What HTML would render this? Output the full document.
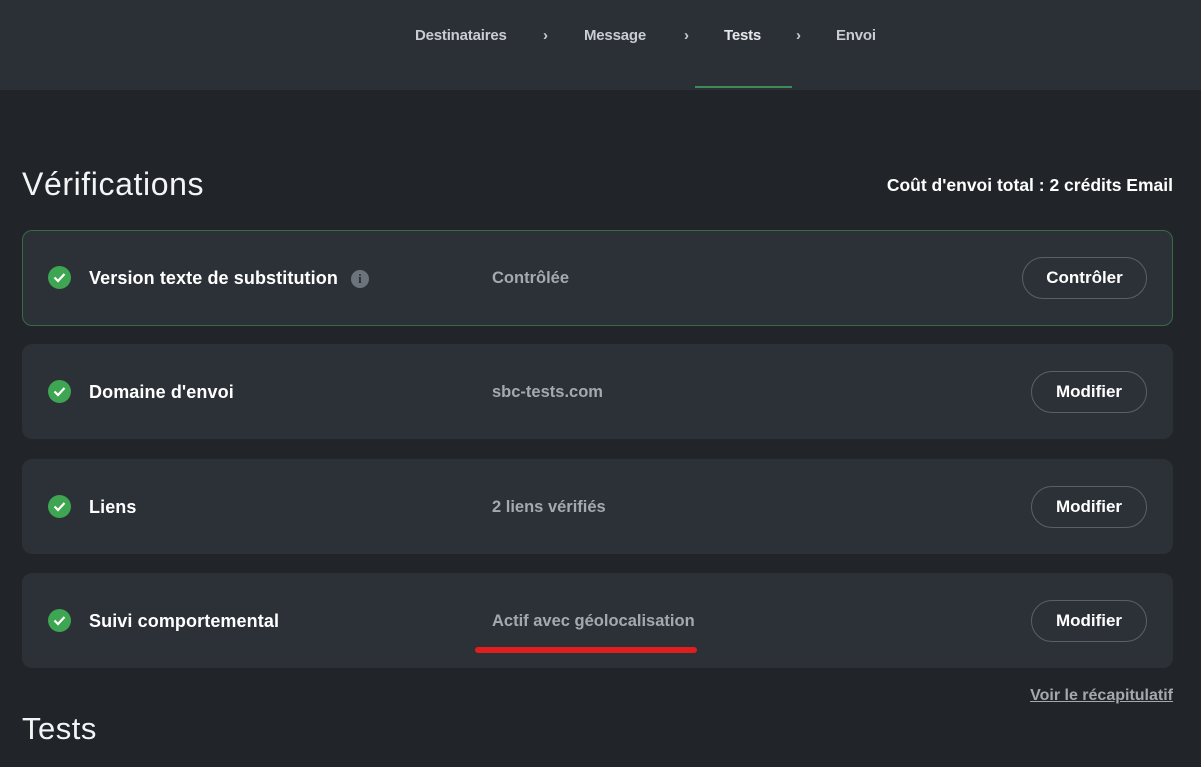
<!DOCTYPE html><html><head><meta charset="utf-8"><style>
*{margin:0;padding:0;box-sizing:border-box}
body{width:1201px;height:767px;overflow:hidden;background:#212428;font-family:"Liberation Sans",sans-serif;position:relative;color:#fff}
.hdr{position:absolute;left:0;top:0;width:1201px;height:90px;background:#2b3037}
.nav{position:absolute;top:27px;font-size:15px;color:#c9ccd0;font-weight:bold;letter-spacing:-0.2px}
.ul{position:absolute;left:695px;top:86px;width:97px;height:2px;background:#3f8a55}
h1{position:absolute;left:22px;top:166px;font-size:32px;font-weight:400;color:#f3f4f5;letter-spacing:0.6px}
.cost{position:absolute;right:28px;top:175px;font-size:17.5px;color:#fff;font-weight:bold}
.card{position:absolute;left:22px;width:1151px;height:95px;background:#2c3138;border-radius:10px}
.card.g{border:1px solid #386a45}
.chk{position:absolute;left:26px;top:36px;width:23px;height:23px;border-radius:50%;background:#3ea553}
.chk svg{position:absolute;left:5px;top:6px}
.t{position:absolute;left:67px;top:38px;font-size:18px;color:#fff;font-weight:bold;letter-spacing:0.1px}
.v{position:absolute;left:470px;top:39px;font-size:16.5px;color:#a4a9af;font-weight:bold}
.b{position:absolute;right:26px;top:27px;height:42px;border:1.5px solid #5b6066;border-radius:21px;font-size:17px;font-weight:bold;color:#fff;display:flex;align-items:center;justify-content:center}
.i{display:inline-block;width:18px;height:18px;border-radius:50%;background:#6d737b;color:#2c3138;font-size:13px;font-weight:bold;text-align:center;line-height:18px;margin-left:13px;vertical-align:1px;font-family:"Liberation Serif",serif}
</style></head><body>
<div class="hdr">
<span class="nav" style="left:415px">Destinataires</span>
<span class="nav" style="left:543px">›</span>
<span class="nav" style="left:584px">Message</span>
<span class="nav" style="left:684px">›</span>
<span class="nav" style="left:724px;color:#e6e8ea">Tests</span>
<span class="nav" style="left:796px">›</span>
<span class="nav" style="left:836px">Envoi</span>
<div class="ul"></div>
</div>
<h1>Vérifications</h1>
<div class="cost">Coût d'envoi total : 2 crédits Email</div>

<div class="card g" style="top:230px;height:96px"><div class="chk" style="left:25px;top:35px"><svg width="13" height="11" viewBox="0 0 13 11"><path d="M1.5 5.5l3.5 3.5 6.5-7" stroke="#fff" stroke-width="2.2" fill="none"/></svg></div><span class="t" style="left:66px;top:37px">Version texte de substitution<span class="i">i</span></span><span class="v" style="left:469px;top:38px">Contrôlée</span><div class="b" style="right:25px;top:26px;width:125px">Contrôler</div></div>

<div class="card" style="top:344px"><div class="chk"><svg width="13" height="11" viewBox="0 0 13 11"><path d="M1.5 5.5l3.5 3.5 6.5-7" stroke="#fff" stroke-width="2.2" fill="none"/></svg></div><span class="t">Domaine d'envoi</span><span class="v">sbc-tests.com</span><div class="b" style="width:116px">Modifier</div></div>

<div class="card" style="top:459px"><div class="chk"><svg width="13" height="11" viewBox="0 0 13 11"><path d="M1.5 5.5l3.5 3.5 6.5-7" stroke="#fff" stroke-width="2.2" fill="none"/></svg></div><span class="t">Liens</span><span class="v">2 liens vérifiés</span><div class="b" style="width:116px">Modifier</div></div>

<div class="card" style="top:573px"><div class="chk"><svg width="13" height="11" viewBox="0 0 13 11"><path d="M1.5 5.5l3.5 3.5 6.5-7" stroke="#fff" stroke-width="2.2" fill="none"/></svg></div><span class="t">Suivi comportemental</span><span class="v">Actif avec géolocalisation</span><div class="b" style="width:116px">Modifier</div></div>

<div style="position:absolute;left:475px;top:647px;width:222px;height:6px;border-radius:3px;background:#e01e1e"></div>
<div style="position:absolute;right:28px;top:687px;font-size:16px;font-weight:bold;color:#a4a9af;text-decoration:underline">Voir le récapitulatif</div>
<div style="position:absolute;left:22px;top:711px;font-size:31px;color:#f3f4f5;letter-spacing:0.5px">Tests</div>
</body></html>
